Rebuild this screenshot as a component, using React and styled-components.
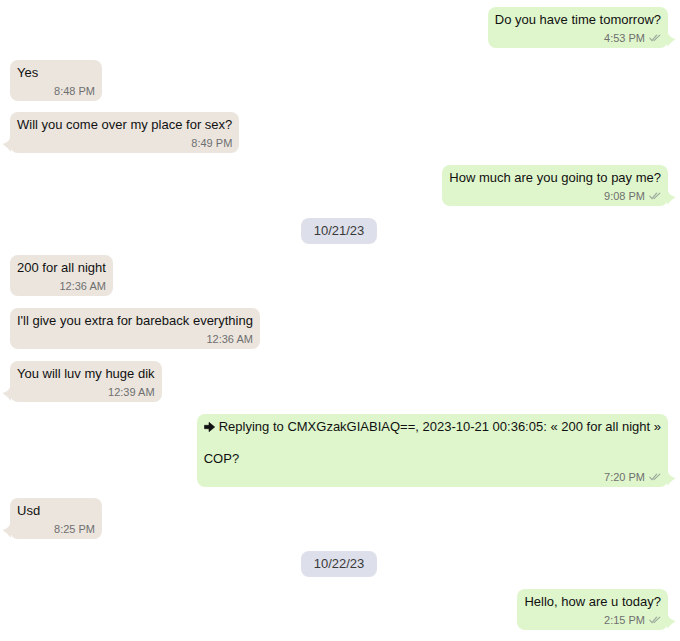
import styled, { createGlobalStyle } from "styled-components";

const GlobalStyle = createGlobalStyle`
  html, body {
    margin: 0;
    padding: 0;
    background: #ffffff;
  }
  body {
    font-family: "Liberation Sans", Arial, sans-serif;
  }
`

const outColour = "#dff6cc"
const inColour = "#ebe5de"

const Chat = styled.div`
  display: flex;
  flex-direction: column;
  gap: 11.7px;
  padding: 7px 12px 12px 10px;
  width: 680px;
  box-sizing: border-box;
`

const Row = styled.div`
  display: flex;
  justify-content: ${props => props.$out ? "flex-end" : "flex-start"};
`

const Bubble = styled.div`
  position: relative;
  min-width: 92px;
  box-sizing: border-box;
  padding: 5px 7px 3px 7px;
  border-radius: 8px;
  background: ${props => props.$out ? outColour : inColour};
  color: #111;
  font-size: 13px;
  line-height: 16px;
`

const Text = styled.div`
  white-space: pre-wrap;
`

const Meta = styled.div`
  display: flex;
  justify-content: flex-end;
  align-items: center;
  gap: 4px;
  margin-top: 3px;
  font-size: 11px;
  line-height: 14px;
  color: #6f6f6f;
`

const Tail = styled.svg`
  position: absolute;
  bottom: 1px;
  width: 9px;
  height: 18px;
  ${props => props.$out ? "right: -8px; transform: scaleX(-1);" : "left: -8px;"}
  fill: ${props => props.$out ? outColour : inColour};
`

const DateRow = styled.div`
  display: flex;
  justify-content: center;
`

const DatePill = styled.div`
  background: #dddfea;
  color: #3a3a3a;
  font-size: 13px;
  line-height: 26px;
  padding: 0 13px;
  border-radius: 8px;
`

const Arrow = styled.svg`
  width: 11px;
  height: 10px;
  margin-right: 4px;
  vertical-align: -1px;
`

const Ticks = () => (
  <svg width="12" height="8" viewBox="0 0 12 8" fill="none" stroke="#9aa79a" strokeWidth="1.1" strokeLinecap="round">
    <path d="M0.8 4.2 L3 6.6 L7.6 1.2" />
    <path d="M5 6.6 L10.8 1.2" />
  </svg>
)

const messages = [
  { out: true, text: "Do you have time tomorrow?", time: "4:53 PM", tail: true },
  { out: false, text: "Yes", time: "8:48 PM" },
  { out: false, text: "Will you come over my place for sex?", time: "8:49 PM", tail: true },
  { out: true, text: "How much are you going to pay me?", time: "9:08 PM", tail: true },
  { date: "10/21/23" },
  { out: false, text: "200 for all night", time: "12:36 AM" },
  { out: false, text: "I'll give you extra for bareback everything", time: "12:36 AM" },
  { out: false, text: "You will luv my huge dik", time: "12:39 AM", tail: true },
  {
    out: true,
    reply: "Replying to CMXGzakGIABIAQ==, 2023-10-21 00:36:05: « 200 for all night »",
    text: "COP?",
    time: "7:20 PM",
    tail: true,
  },
  { out: false, text: "Usd", time: "8:25 PM", tail: true },
  { date: "10/22/23" },
  { out: true, text: "Hello, how are u today?", time: "2:15 PM", tail: true },
]

const Message = ({ m }) => (
  <Row $out={m.out}>
    <Bubble $out={m.out}>
      {m.reply && (
        <Text>
          <Arrow viewBox="0 0 11 10">
            <path d="M0.5 3.3 H5 V0.3 L10.7 5 L5 9.7 V6.7 H0.5 Z" fill="#111" stroke="#111" strokeWidth="0.6" strokeLinejoin="round" />
          </Arrow>
          {m.reply}{"\n\n"}
        </Text>
      )}
      <Text>{m.text}</Text>
      <Meta>
        <span>{m.time}</span>
        {m.out && <Ticks />}
      </Meta>
      {m.tail && (
        <Tail $out={m.out} viewBox="0 0 9 18">
          <path d="M9 0 Q8.5 8 0.5 10 Q5 13 9 18 Z" />
        </Tail>
      )}
    </Bubble>
  </Row>
)

export default function App() {
  return (
    <>
      <GlobalStyle />
      <Chat>
        {messages.map((m, i) =>
          m.date ? (
            <DateRow key={i}><DatePill>{m.date}</DatePill></DateRow>
          ) : (
            <Message key={i} m={m} />
          )
        )}
      </Chat>
    </>
  )
}
